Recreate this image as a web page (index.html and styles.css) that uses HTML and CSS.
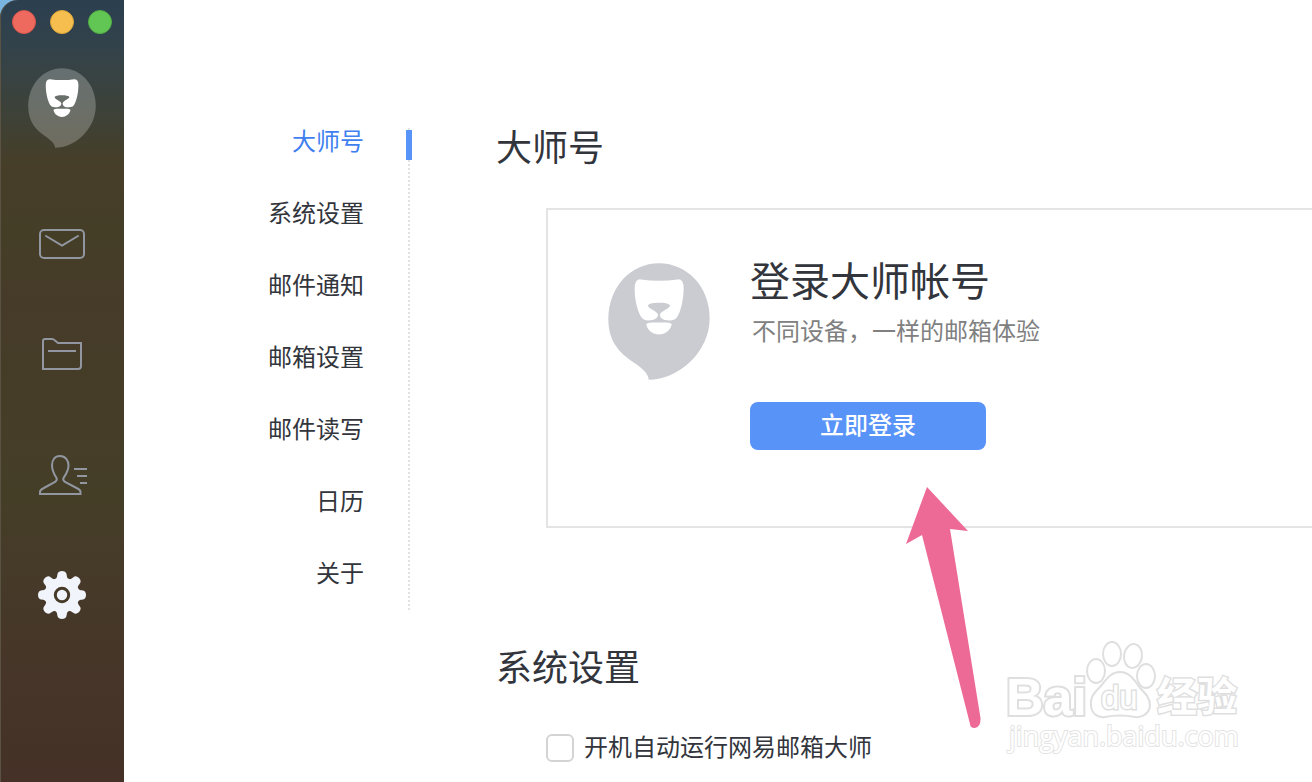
FILE: index.html
```
<!DOCTYPE html>
<html lang="zh-CN">
<head>
<meta charset="utf-8">
<title>网易邮箱大师</title>
<link rel="stylesheet" href="styles.css">
</head>
<body>
<svg class="defs" aria-hidden="true">
  <symbol id="lion" viewBox="54 53 306 350" preserveAspectRatio="none">
    <path class="lion-bubble" d="M207 54C292 54 359 125 359 218C359 320 265 402 176 402C176 385 158 369 130 350C90 323 55 290 55 220C56 125 122 54 207 54Z"/>
    <path class="lion-face" d="M152 102Q180 106 207 106Q235 106 263 102Q281 101 281 130C280 165 273 195 262 214Q256 225 238 225C222 225 210 220 210 208C210 197 240 190 240 180C238 174 222 172 207 172C190 172 175 174 174 181C174 190 203 197 204 208C204 220 190 225 175 225Q160 225 153 214C143 196 134 165 134 130Q134 101 152 102Z"/>
    <path class="lion-face" d="M169 238C168 230 190 231 207 231C225 231 246 230 245 238C240 256 225 267 207 267C190 267 173 256 169 238Z"/>
  </symbol>
</svg>
<div class="app">
  <aside class="sidebar">
    <div class="lights">
      <button class="light close" aria-label="关闭"></button>
      <button class="light minimize" aria-label="最小化"></button>
      <button class="light maximize" aria-label="最大化"></button>
    </div>
    <svg class="avatar" aria-hidden="true"><use href="#lion"/></svg>
    <nav class="tools">
      <button class="tool" aria-label="邮件"><svg viewBox="0 0 48 48"><rect x="2" y="19" width="44" height="28" rx="4"/><path stroke-linecap="round" d="M8 25L24 34.500L40 25"/></svg></button>
      <button class="tool" aria-label="文件"><svg viewBox="0 0 48 48"><path d="M5 38V10Q5 8 7 8H14Q15.500 8 17 9.500L20 12H43V35Q43 38 40 38H4M10 20H38"/></svg></button>
      <button class="tool" aria-label="联系人"><svg viewBox="0 0 48 48"><path d="M22 5C16.500 5 14 9.500 14 14.500C14 20 16 23 18.500 27Q19.500 29 17 31L5 37.500Q2 39 2 41V43H42.500V41Q42.500 39 39.500 37.500L27 31Q24.500 29 25.500 27C28 23 30.500 20 30.500 14.500C30.500 9.500 27.500 5 22 5ZM36 18H49M39 25H49M42 32H49"/></svg></button>
      <button class="tool active" aria-label="设置"><svg viewBox="-24 -24 48 48">
        <path id="tooth" d="M-9 -14C-5 -16 -5 -18 -4.500 -21C-4 -25 4 -25 4.500 -21C5 -18 5 -16 9 -14Z"/><use href="#tooth" transform="rotate(45)"/><use href="#tooth" transform="rotate(90)"/><use href="#tooth" transform="rotate(135)"/><use href="#tooth" transform="rotate(180)"/><use href="#tooth" transform="rotate(225)"/><use href="#tooth" transform="rotate(270)"/><use href="#tooth" transform="rotate(315)"/>
        <circle r="17.500"/><circle class="ring" r="6.700"/></svg></button>
    </nav>
  </aside>
  <nav class="sections">
    <a class="current" href="#account">大师号</a>
    <a href="#system">系统设置</a>
    <a href="#notice">邮件通知</a>
    <a href="#mailbox">邮箱设置</a>
    <a href="#compose">邮件读写</a>
    <a href="#calendar">日历</a>
    <a href="#about">关于</a>
  </nav>
  <main class="content">
    <section id="account">
      <h1>大师号</h1>
      <div class="card">
        <svg class="card-logo" aria-hidden="true"><use href="#lion"/></svg>
        <div class="card-body">
          <h2>登录大师帐号</h2>
          <p>不同设备，一样的邮箱体验</p>
          <button class="login">立即登录</button>
        </div>
      </div>
    </section>
    <section id="system" class="system">
      <h1>系统设置</h1>
      <label class="option" for="autorun"><input type="checkbox" id="autorun"><span>开机自动运行网易邮箱大师</span></label>
    </section>
  </main>
  <svg class="arrow" viewBox="0 0 64 244" aria-hidden="true"><path d="M22 1L63 45L45 43L75.500 232Q76 241 70 242Q65 242 65 238L17 49L1 58Z"/></svg>
  <svg class="watermark" viewBox="0 0 240 120" aria-hidden="true">
    <text class="wm-bold" x="0" y="75" font-size="52">Bai</text>
    <ellipse cx="90" cy="31" rx="9" ry="12"/>
    <ellipse cx="106" cy="14" rx="9" ry="12"/>
    <ellipse cx="127" cy="16" rx="9" ry="12" transform="rotate(8 127 16)"/>
    <ellipse cx="140" cy="36" rx="9" ry="12"/>
    <path d="M114 32C103 32 99 42 93 48C87 54 84 58 85 66C86 74 92 78 99 77C109 75 119 75 129 77C137 78 143 73 144 66C144 58 140 54 135 49C130 43 125 32 114 32Z"/>
    <text class="wm-du" x="95" y="69" font-size="33">du</text>
    <text class="wm-cjk" x="151" y="71" font-size="40">经验</text>
    <text class="wm-url" x="3" y="106" font-size="27">jingyan.baidu.com</text>
  </svg>
</div>
</body>
</html>
```
FILE: styles.css
```
* { box-sizing: border-box; }
body {
  margin: 0;
  background: #fff;
  color: #32353c;
  font-family: "Noto Sans CJK SC", sans-serif;
  font-size: 24px;
}
button { border: 0; padding: 0; background: none; font: inherit; }
h1, h2, p { margin: 0; font-weight: 400; }
.defs { position: absolute; width: 0; height: 0; }
.app {
  position: relative;
  display: flex;
  min-height: 100vh;
  overflow: hidden;
  background: linear-gradient(90deg, #79b4e0 24px, #fff 24px);
}
.sidebar {
  flex: none;
  width: 124px;
  display: flex;
  flex-direction: column;
  align-items: center;
  padding-top: 10px;
  border-top-left-radius: 18px;
  box-shadow: inset 1px 0 #5a5344;
  background: linear-gradient(#2b3f50 0, #34434a 50px, #3d4239 110px, #463e28 165px, #453e27 240px, #463b29 300px, #453d28 400px, #453e27 500px, #463a29 570px, #463528 680px, #453127 100%);
}
.lights { display: flex; gap: 14px; }
.light { width: 24px; height: 24px; border-radius: 50%; }
.close { background: #ee6a5f; border: 1px solid #d9564c; }
.minimize { background: #f5be4f; border: 1px solid #dea63a; }
.maximize { background: #62c654; border: 1px solid #50ad43; }
.avatar { width: 68px; height: 80px; margin-top: 34px; color: rgba(255, 255, 255, 0.24); }
.lion-bubble { fill: currentColor; }
.lion-face { fill: #fff; }
.tools { display: flex; flex-direction: column; gap: 72px; margin-top: 63px; }
.tool { width: 48px; height: 48px; }
.tool svg {
  display: block;
  overflow: visible;
  fill: none;
  stroke: #9196a0;
  stroke-width: 2;
}
.active svg { fill: #f1f4fa; stroke: none; }
.active .ring { fill: none; stroke: #463a29; stroke-width: 3; }
.sections {
  flex: none;
  align-self: flex-start;
  width: 286px;
  margin-top: 128px;
  padding: 0 46px 26px 0;
  display: flex;
  flex-direction: column;
  align-items: flex-end;
  gap: 48px;
  background: repeating-linear-gradient(#e2e2e2 0 2px, #fff 2px 4px) right / 2px 100% no-repeat;
}
.sections a { position: relative; color: inherit; line-height: 24px; text-decoration: none; }
.sections .current { color: #407ff0; }
.current::after {
  content: "";
  position: absolute;
  top: 2px;
  right: -48px;
  width: 6px;
  height: 30px;
  background: #5893f8;
}
.content { flex: 1; min-width: 0; padding: 128px 0 20px 86px; }
h1 { font-size: 36px; line-height: 34px; }
.card {
  display: flex;
  gap: 40px;
  margin: 46px 0 0 50px;
  padding: 50px 0 76px 60px;
  border: 2px solid #e4e4e4;
  border-right: 0;
}
.card-logo { flex: none; width: 102px; height: 117px; margin-top: 3px; color: #cbccd2; }
.card h2 { font-size: 40px; line-height: 38px; }
.card p { margin: 14px 0 54px 2px; color: #808080; line-height: 36px; }
.login {
  display: block;
  width: 236px;
  height: 48px;
  padding-bottom: 4px;
  border-radius: 8px;
  background: #5893f8;
  color: #fff;
  font-weight: 500;
  line-height: 44px;
}
.system { margin-top: 120px; }
.option { display: flex; align-items: center; gap: 10px; margin: 52px 0 0 50px; line-height: 24px; }
.option span { padding-bottom: 4px; }
.option input {
  appearance: none;
  width: 28px;
  height: 28px;
  margin: 0;
  border: 2px solid #d4d4d4;
  border-radius: 6px;
  background: #fff;
}
.arrow {
  position: absolute;
  left: 905px;
  top: 486px;
  width: 64px;
  height: 244px;
  overflow: visible;
  fill: #ed6a97;
}
.watermark {
  position: absolute;
  left: 1006px;
  top: 640px;
  width: 240px;
  height: 120px;
  overflow: visible;
  fill: #fff;
  stroke: #dfdfdf;
  stroke-width: 2;
}
.watermark text { paint-order: stroke; }
.wm-bold { font-family: "Liberation Sans", sans-serif; font-weight: 700; stroke-width: 4; }
.wm-du { font-family: "Liberation Sans", sans-serif; stroke-width: 3; }
.wm-cjk { font-family: "Noto Sans CJK SC", sans-serif; font-weight: 700; stroke-width: 3; }
.wm-url { font-family: "Open Sans", sans-serif; stroke: #e4e4e4; stroke-width: 2; }
```
